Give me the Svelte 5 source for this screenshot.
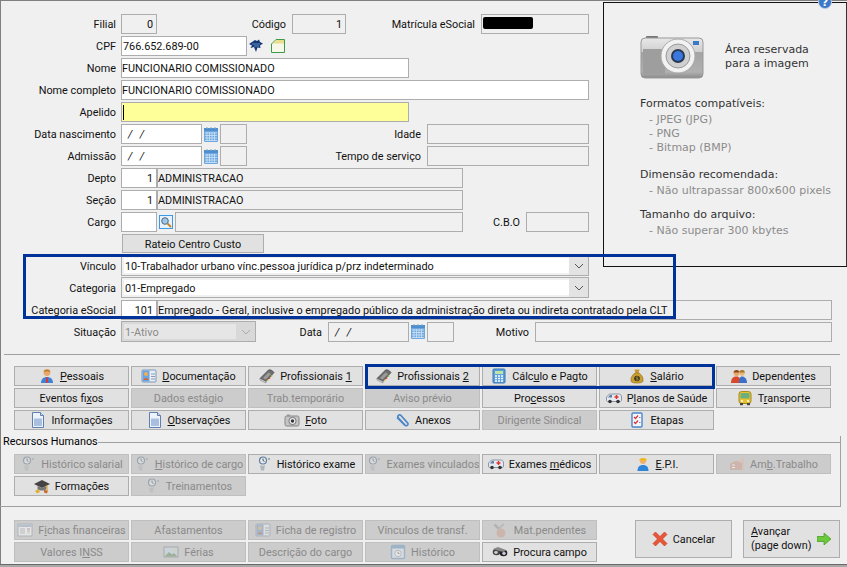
<script>
  const main = [
    [['&Pessoais','person'],['&Documentação','card'],['Profissionais &1','book'],['Profissionais &2','book'],['Cálc&ulo e Pagto','calc'],['&Salário','money'],['Dependen&tes','people']],
    [['Eventos fi&xos'],['Dados está&gio',null,1],['Trab.temporário',null,1],['Aviso prévio',null,1],['Pro&cessos'],['P&lanos de Saúde','amb'],['T&ransporte','bus']],
    [['Informações','sheet'],['&Observações','sheet'],['&Foto','cam'],['Anexos','clip'],['Dirigente Sindical',null,1],['Etapas','check']]
  ];
  const rh = [
    [['Histórico salarial','steth',1],['&Histórico de cargo','steth',1],['Histórico exame','steth'],['Exames vinculados','steth',1],['Exames &médicos','amb'],['&E.P.I.','worker'],['Am&b.Trabalho','factory',1]],
    [['Formações','grad'],['Treinamentos','steth',1]]
  ];
  const foot = [
    [['F&ichas financeiras','table',1],['Afastamentos',null,1],['Ficha de registro','card',1],['Vínculos de transf.',null,1],['Mat.pendentes','wrench',1]],
    [['Valores I&NSS',null,1],['Férias','pic',1],['Descrição do cargo',null,1],['Histórico','clock',1],['Procura campo','bino']]
  ];
  const parts = (s) => {
    const i = s.indexOf('&');
    return i < 0 ? [s, '', ''] : [s.slice(0, i), s[i + 1], s.slice(i + 2)];
  };
</script>

{#snippet ic(n)}
  <svg class="ic" viewBox="0 0 16 16" width="16" height="16">
    {#if n === 'person'}
      <circle cx="8" cy="4.500" r="3.400" fill="#e9a868"/><path d="M4.600 4c.4-3 6.400-3 6.800 0-2-1-4.800-1-6.800 0z" fill="#b8782c"/><path d="M2 15c0-4 2.500-6 6-6s6 2 6 6z" fill="#3f83d6"/><path d="M7.400 9h1.200l.6 5-1.200 1-1.200-1z" fill="#d33"/>
    {:else if n === 'card'}
      <rect x="1" y="2" width="14" height="12" rx="1" fill="#e8eef6" stroke="#7f98b8"/><rect x="1.500" y="2.500" width="7" height="11" fill="#6aa2e2"/><circle cx="5" cy="6" r="2" fill="#f0b050"/><path d="M2.500 12c0-2.500 5-2.500 5 0z" fill="#d9622a"/><path d="M10 6h4M10 8.500h4M10 11h4" stroke="#8a9bb0"/>
    {:else if n === 'book'}
      <path d="M1 10.500 9.500 2c1.500-.8 4 .5 5.500 2.500L7 13.500z" fill="#6e6e6e" stroke="#3f3f3f" stroke-width=".7"/><path d="m1 10.500 6 3V15l-6-3z" fill="#e0e0e0" stroke="#666" stroke-width=".5"/><path d="M4 10 9.500 4.500l2.500 1.500-5.500 5.500z" fill="#9c9c9c"/><path d="m12.500 7 1.200.7-1 1.200-1.200-.7z" fill="#8c3"/><path d="m10.500 9.200 1.200.7-1 1.200-1.200-.7z" fill="#e33"/><path d="m8.500 11.400 1.200.7-1 1.200-1.200-.7z" fill="#eb3"/>
    {:else if n === 'calc'}
      <rect x="2" y="1" width="12" height="14" rx="1" fill="#5aa0de" stroke="#3b79b5"/><rect x="4" y="3" width="8" height="3" fill="#bfe3a0"/><path d="M4 8h2M7 8h2M10 8h2M4 10.500h2M7 10.500h2M10 10.500h2M4 13h2M7 13h2M10 13h2" stroke="#fff" stroke-width="1.400"/>
    {:else if n === 'money'}
      <path d="M5.500 1.500h5L9.500 5h-3z" fill="#c89a34"/><path d="M6 5C3 7 1.500 10 2 13c.3 1.500 2 2 6 2s5.700-.5 6-2c.5-3-1-6-4-8z" fill="#c9a02e" stroke="#8b6a18" stroke-width=".6"/><circle cx="8" cy="10.500" r="2.800" fill="#3a3018"/><path d="M9.200 9.300c-1-.6-2.400-.3-2.200.5s2.200.5 2.200 1.400-1.400 1-2.400.5" stroke="#e0c060" stroke-width=".7" fill="none"/>
    {:else if n === 'people'}
      <circle cx="5.500" cy="5" r="3" fill="#e9a868"/><path d="M2.500 4.500c.3-3.500 6-3.500 6 0z" fill="#8a4a1c"/><path d="M0 15c0-5 2.500-6.500 5.500-6.500s4 2 4 6.500z" fill="#d8492a"/><circle cx="11" cy="5" r="2.800" fill="#e9b878"/><path d="M8.300 4.500c.3-3.200 5.400-3.200 5.400 0z" fill="#a8742c"/><path d="M8 15c0-4 1-6.500 3-6.500s5 1.500 5 6.500z" fill="#3c70c8"/>
    {:else if n === 'amb'}
      <path d="M.5 10V7l3-3h9c2 0 3 1 3 3v3c0 1-.5 1.500-1 1.500H1.500C1 11.500.5 11 .5 10z" fill="#e6e9ee" stroke="#8896a8"/><path d="M2 7.500l2-2.500h2v2.500z" fill="#5d7fa6"/><path d="M10.500 5v4M8.500 7h4" stroke="#e03030" stroke-width="1.400"/><circle cx="4" cy="11.500" r="1.800" fill="#333"/><circle cx="12" cy="11.500" r="1.800" fill="#333"/>
    {:else if n === 'bus'}
      <rect x="2" y="1.500" width="12" height="12" rx="2.500" fill="#e8c030" stroke="#a88a18"/><rect x="3.500" y="3" width="9" height="5.500" rx="1" fill="#6ab07c"/><rect x="3" y="13" width="3" height="2.200" fill="#444"/><rect x="10" y="13" width="3" height="2.200" fill="#444"/><circle cx="5" cy="11" r="1" fill="#fff"/><circle cx="11" cy="11" r="1" fill="#fff"/>
    {:else if n === 'sheet'}
      <path d="M2.500.5h8l3 3v12h-11z" fill="#eef2fa" stroke="#5f7fb0"/><path d="M10.500.5v3h3" fill="#cfdcef" stroke="#5f7fb0"/><rect x="4" y="6.500" width="8" height="7.500" fill="#a9bfe0"/>
    {:else if n === 'cam'}
      <rect x="1" y="4" width="14" height="10" rx="1.500" fill="#c4c4c4" stroke="#888"/><rect x="3" y="2.500" width="3" height="2" fill="#999"/><circle cx="8.500" cy="9" r="3.600" fill="#eee" stroke="#777"/><circle cx="8.500" cy="9" r="1.700" fill="#334"/>
    {:else if n === 'clip'}
      <path d="M3 5.500 10.500 13c1.500 1.500 4 .5 3.500-1.500L7 3.500C5.500 2 3 3.500 4 5.500l7 7.500" fill="none" stroke="#4a86c8" stroke-width="1.700"/>
    {:else if n === 'check'}
      <rect x="3" y="1" width="10" height="14" rx="1" fill="#f3f6fb" stroke="#4a86c8" stroke-width="1.400"/><path d="m5 5 1.500 1.500L9 3.500M5 10l1.500 1.500L9 8.500" stroke="#d33" stroke-width="1.200" fill="none"/><path d="M10 5.500h1.500M10 10.500h1.500" stroke="#88a"/>
    {:else if n === 'steth'}
      <circle cx="7" cy="4.500" r="3.500" fill="#e4e8ec" stroke="#5f7f9f" stroke-width="1.200"/><path d="M7 2.500v2l1.500 1" stroke="#456" fill="none"/><path d="M4 9c1 1 4 1 5 0l-1 5.500H5z" fill="#aeb6be"/><circle cx="13" cy="3" r="1" fill="#8a9aaa"/>
    {:else if n === 'worker'}
      <circle cx="8" cy="5" r="3" fill="#eeb070"/><path d="M4 4.500C4 1 12 1 12 4.500z" fill="#f0b818"/><path d="M2.500 15c0-4 2-6 5.500-6s5.500 2 5.500 6z" fill="#2f86d8"/>
    {:else if n === 'factory'}
      <path d="M1 14V7l4-2 8-1V1h2v13z" fill="#f0b8a0"/><path d="M1 14V8l6-3 6 2v7z" fill="#e89a82"/><path d="M3 9h3M3 11.500h3" stroke="#fff"/>
    {:else if n === 'grad'}
      <path d="M0 6 8 2l8 4-8 4z" fill="#444"/><path d="M3.500 8v3c2 2 7 2 9 0V8L8 10z" fill="#777"/><path d="M13 7v5" stroke="#e0a020"/><path d="M1 13l3-2 2 3-3 1.500z" fill="#e0b030"/><path d="M10 12l4 .5-1 3-3-1z" fill="#c96a28"/>
    {:else if n === 'table'}
      <rect x="1" y="2" width="14" height="12" fill="#fff" stroke="#8a9ab0"/><rect x="1.500" y="2.500" width="13" height="2.500" fill="#9ab8d8"/><path d="M3 7h5M3 9h5M3 11h5" stroke="#9ab"/><path d="M10 7h3" stroke="#d66"/><path d="M10 9h3" stroke="#7b7"/><path d="M10 11h3" stroke="#dc7"/>
    {:else if n === 'pic'}
      <rect x="1" y="3" width="14" height="10" fill="#bcdcf0" stroke="#888"/><path d="M1.500 12.500 6 8l3 2.500 2-1.500 3.500 3.500z" fill="#5ca050"/><circle cx="11" cy="6" r="1.300" fill="#f0d060"/>
    {:else if n === 'clock'}
      <rect x="1.500" y="1.500" width="13" height="13" rx="1" fill="#dcecfa" stroke="#5aa0de" stroke-width="1.500"/><rect x="2" y="2" width="12" height="2.500" fill="#5aa0de"/><circle cx="8" cy="9.500" r="3.200" fill="#fff" stroke="#9ab"/><path d="M8 7.800v1.700h1.500" stroke="#678" fill="none"/>
    {:else if n === 'wrench'}
      <path d="M1.500 2.500 6 7" stroke="#999" stroke-width="2.500"/><path d="M11 2 8 4.500 6 7" stroke="#aaa" stroke-width="2"/><circle cx="8" cy="11" r="4.500" fill="#e59a80"/>
    {:else if n === 'bino'}
      <ellipse cx="4.500" cy="8" rx="3.800" ry="3.200" fill="#444"/><ellipse cx="11.500" cy="9" rx="3.800" ry="3.200" fill="#222"/><path d="M1 5 6 3l8 3-2 2-5-1z" fill="#888"/><ellipse cx="4" cy="8.500" rx="1.800" ry="1.400" fill="#ccd"/><ellipse cx="12" cy="9.500" rx="1.800" ry="1.400" fill="#ccd"/>
    {/if}
  </svg>
{/snippet}

{#snippet cal()}
  <svg class="cal" viewBox="0 0 14 15" width="14" height="15">
    <rect x="0" y="1" width="14" height="14" rx="1" fill="#6fa8de"/><rect x="0" y="1" width="14" height="3" fill="#4f8fd0"/>
    <path d="M1 6h12M1 8.500h12M1 11h12M1 13.500h12M3 5v9M5.500 5v9M8 5v9M10.500 5v9" stroke="#cfe3f7" stroke-width=".8"/>
    <path d="M3 0v2M7 0v2M11 0v2" stroke="#8ab"/>
  </svg>
{/snippet}

{#snippet btn(b)}
  {@const p = parts(b[0])}
  <div class="b" class:off={b[2]}>
    {#if b[1]}<span class="iw" class:dim={b[2]}>{@render ic(b[1])}</span>{/if}
    <span class="t">{p[0]}{#if p[1]}<u>{p[1]}</u>{/if}{p[2]}</span>
  </div>
{/snippet}

<div class="win">
  <div class="top">
    <div class="form">
      <div class="row">
        <span class="lbl">Filial</span><div class="f num w36 off">0</div>
        <span class="lbl2 c1">Código</span><div class="f num w54 off">1</div>
        <span class="lbl2 c1">Matrícula eSocial</span>
        <div class="f w108 off blk"><i></i></div>
      </div>
      <div class="row">
        <span class="lbl">CPF</span><div class="f w126 wh pad">766.652.689-00</div>
        <svg class="eagle" viewBox="0 0 14 14" width="14" height="14"><path d="M0 5 6 1l2 1 2-1.500 1 2.500 3 1.500-3 2 .5 2.500-3-.5-1.500 4.500L5 8 1.500 9 3 6.500z" fill="#123a78"/><path d="M3 5h8M5 7h5" stroke="#8fb0d8" stroke-width=".7"/></svg>
        <svg class="gdoc" viewBox="0 0 14 14" width="14" height="14"><path d="M.5 5 5 .5h8.500v13H.5z" fill="#f6f8e8" stroke="#3d9a4a"/><path d="M5.500 1h7.500v3.500H1.500z" fill="#eadf8c"/></svg>
      </div>
      <div class="row"><span class="lbl">Nome</span><div class="f w288 wh">FUNCIONARIO COMISSIONADO</div></div>
      <div class="row"><span class="lbl">Nome completo</span><div class="f w468 wh">FUNCIONARIO COMISSIONADO</div></div>
      <div class="row"><span class="lbl">Apelido</span><div class="f w288 yl"><b class="caret"></b></div></div>
      <div class="row">
        <span class="lbl">Data nascimento</span><div class="f w81 wh date">/  /</div>{@render cal()}<div class="f w27 off"></div>
        <div class="tail"><span class="lbl3">Idade</span><div class="f w162 off"></div></div>
      </div>
      <div class="row">
        <span class="lbl">Admissão</span><div class="f w81 wh date">/  /</div>{@render cal()}<div class="f w27 off"></div>
        <div class="tail"><span class="lbl3">Tempo de serviço</span><div class="f w162 off"></div></div>
      </div>
      <div class="row"><span class="lbl">Depto</span><div class="f num w36 wh">1</div><div class="f w306 off">ADMINISTRACAO</div></div>
      <div class="row"><span class="lbl">Seção</span><div class="f num w36 wh">1</div><div class="f w306 off">ADMINISTRACAO</div></div>
      <div class="row">
        <span class="lbl">Cargo</span><div class="f w36 wh"></div>
        <svg class="srch" viewBox="0 0 14 14" width="14" height="14"><rect x=".5" y=".5" width="13" height="13" fill="#e8f2fc" stroke="#3a9ae8"/><circle cx="6" cy="6" r="3.300" fill="#9cc8ee" stroke="#567"/><path d="m8.500 8.500 3.500 3.500" stroke="#c8862a" stroke-width="2"/></svg>
        <div class="f w288 off"></div>
        <div class="tail"><span class="lbl3">C.B.O</span><div class="f w63 off"></div></div>
      </div>
      <div class="rateio">Rateio Centro Custo</div>
      <div class="row r22"><span class="lbl">Vínculo</span>
        <div class="sel"><span>10-Trabalhador urbano vínc.pessoa jurídica p/prz indeterminado</span><em><svg viewBox="0 0 10 6" width="10" height="6"><path d="m1 1 4 4 4-4" fill="none" stroke="#555"/></svg></em></div>
      </div>
      <div class="row r22"><span class="lbl">Categoria</span>
        <div class="sel"><span>01-Empregado</span><em><svg viewBox="0 0 10 6" width="10" height="6"><path d="m1 1 4 4 4-4" fill="none" stroke="#555"/></svg></em></div>
      </div>
    </div>
    <aside class="panel">
      <svg class="help" viewBox="0 0 14 14" width="14" height="14"><circle cx="7" cy="7" r="6.500" fill="#3a78c8" stroke="#bcd"/><text x="7" y="10.500" text-anchor="middle" class="q">?</text></svg>
      <div class="hero">
        <svg viewBox="0 0 64 44" width="64" height="44">
          <defs><linearGradient id="cb" x1="0" y1="0" x2="0" y2="1"><stop offset="0" stop-color="#e8e8e8"/><stop offset=".35" stop-color="#cfcfcf"/><stop offset=".36" stop-color="#a4a4a4"/><stop offset=".85" stop-color="#b0b0b0"/><stop offset="1" stop-color="#8a8a8a"/></linearGradient></defs>
          <rect x="6" y="1" width="12" height="4" rx="1" fill="#777"/>
          <rect x="1" y="3" width="62" height="40" rx="4" fill="url(#cb)" stroke="#999"/>
          <rect x="3" y="14" width="22" height="25" fill="#9e9e9e"/>
          <circle cx="38" cy="21" r="17" fill="#f2f2f2" stroke="#aaa"/>
          <circle cx="38" cy="21" r="12" fill="#d0d0d0" stroke="#999"/>
          <circle cx="38" cy="21" r="7" fill="#2a3a50"/>
          <circle cx="38" cy="21" r="5" fill="#3a78e0"/>
          <rect x="53" y="6" width="6" height="4" fill="#3a78c8"/>
        </svg>
        <p>Área reservada<br/>para a imagem</p>
      </div>
      <h4 class="h1">Formatos compatíveis:</h4>
      <p class="it">- JPEG (JPG)</p><p class="it">- PNG</p><p class="it">- Bitmap (BMP)</p>
      <h4 class="h2">Dimensão recomendada:</h4>
      <p class="it">- Não ultrapassar 800x600 pixels</p>
      <h4 class="h3">Tamanho do arquivo:</h4>
      <p class="it">- Não superar 300 kbytes</p>
    </aside>
  </div>

  <div class="row r22"><span class="lbl">Categoria eSocial</span><div class="f num w36 wh">101</div><div class="f w675 off">Empregado - Geral, inclusive o empregado público da administração direta ou indireta contratado pela CLT</div></div>
  <div class="row r22 last">
    <span class="lbl">Situação</span>
    <div class="sel dis"><span>1-Ativo</span><em><svg viewBox="0 0 10 6" width="10" height="6"><path d="m1 1 4 4 4-4" fill="none" stroke="#aaa"/></svg></em></div>
    <span class="lbl2 c3">Data</span><div class="f w81 off date">/  /</div>{@render cal()}<div class="f w27 off"></div>
    <span class="lbl2 c4">Motivo</span><div class="f w297 off"></div>
  </div>

  <hr class="sep"/>

  <div class="grid">
    {#each main as r}{#each r as b}{@render btn(b)}{/each}{#if r.length < 7}<div></div>{/if}{/each}
  </div>

  <section class="group">
    <div class="gt"><span>Recursos Humanos</span><i></i></div>
    <div class="grid">
      {#each rh as r}{#each r as b}{@render btn(b)}{/each}{/each}
    </div>
  </section>

  <div class="foot">
    <div class="grid g5">
      {#each foot as r}{#each r as b}{@render btn(b)}{/each}{/each}
    </div>
    <div class="b big cancel">
      <svg viewBox="0 0 16 16" width="16" height="16"><path d="M1 3.500 3.500 1 8 5.500 12.500 1 15 3.500 10.500 8l4.500 4.500-2.500 2.500L8 10.500 3.500 15 1 12.500 5.500 8z" fill="#e8563a" stroke="#c23a20" stroke-width=".6"/></svg>
      <span class="t">Cancelar</span>
    </div>
    <div class="b big next">
      <span class="tl"><u>A</u>vançar<br/>(page down)</span>
      <svg viewBox="0 0 14 12" width="14" height="12"><path d="M0 3.500h7V0l7 6-7 6V8.500H0z" fill="#6cc93c" stroke="#3c9a1e" stroke-width=".7"/></svg>
    </div>
  </div>

  <div class="ov o1"></div>
  <div class="ov o2"></div>
</div>

<style>
  :global(body) { margin: 0; background: #a9a9a9; }
  .win {
    position: relative;
    width: 847px;
    height: 565px;
    overflow: hidden;
    box-sizing: border-box;
    background: #f0f0f0;
    box-shadow: inset 1px 1px 0 #808080;
    border-bottom: 1px solid #6a6a6a;
    font: 10.850px/14px Roboto, "Noto Sans", sans-serif;
    color: #111;
  }
  .top { display: grid; grid-template-columns: 603px 244px; }
  .form { padding-top: 14px; }
  .row { display: flex; align-items: center; height: 20px; margin-bottom: 2px; }
  .r22 { height: 21px; margin-bottom: 1px; }
  .lbl { width: 116px; margin-right: 5px; text-align: right; white-space: nowrap; flex: none; padding-top: 2px; }
  .lbl2 { flex: none; white-space: nowrap; text-align: right; padding-top: 2px; }
  .c1 { width: 129px; margin-right: 6px; }
  .c3 { width: 66px; margin-right: 6px; }
  .c4 { width: 75px; margin-right: 6px; }
  .lbl3 { margin-right: 6px; white-space: nowrap; padding-top: 2px; }
  .tail { display: flex; align-items: center; margin-left: auto; margin-right: 14px; }
  .f {
    box-sizing: border-box;
    height: 20px;
    border: 1px solid #adadad;
    line-height: 19px;
    white-space: nowrap;
    overflow: hidden;
    flex: none;
  }
  .wh { background: #fff; }
  .off { background: #f0f0f0; }
  .yl { background: #ffff99; position: relative; }
  .num { text-align: right; padding-right: 3px; }
  .pad { padding-left: 1px; }
  .date { padding-left: 6px; white-space: pre; font-style: italic; word-spacing: 1px; }
  .w27 { width: 27px; } .w36 { width: 36px; } .w54 { width: 54px; } .w63 { width: 63px; }
  .w81 { width: 81px; } .w108 { width: 108px; } .w126 { width: 126px; } .w162 { width: 162px; }
  .w288 { width: 288px; } .w297 { width: 297px; } .w306 { width: 306px; } .w468 { width: 468px; } .w675 { width: 675px; }
  .blk { display: flex; align-items: center; padding: 0 0 2px 1px; }
  .blk i { display: block; width: 50px; height: 12px; background: #000; border-radius: 2px; }
  .caret { position: absolute; left: 1px; top: 2px; width: 1px; height: 15px; background: #000; }
  .eagle { margin-left: 2px; }
  .gdoc { margin-left: 8px; }
  .cal { margin: 0 2px; flex: none; }
  .srch { margin: 0 2px; flex: none; }
  .rateio {
    box-sizing: border-box;
    width: 142px;
    height: 19px;
    margin: 1px 0 2px 122px;
    background: #e1e1e1;
    border: 1px solid #adadad;
    text-align: center;
    line-height: 20px;
  }
  .sel {
    box-sizing: border-box;
    display: flex;
    width: 468px;
    height: 21px;
    border: 1px solid #adadad;
    padding: 2px 0 2px 2px;
    background: #f0f0f0;
  }
  .sel span { flex: 1; background: #fff; padding-left: 1px; line-height: 18px; white-space: nowrap; overflow: hidden; }
  .sel em { width: 19px; margin: -2px 0; display: flex; align-items: center; justify-content: center; background: #e3e3e3; }
  .sel.dis { width: 135px; background: #d8d8d8; color: #8a8a8a; }
  .sel.dis span { background: #e6e6e6; }
  .sel.dis em { background: #d8d8d8; }

  .panel {
    position: relative;
    box-sizing: border-box;
    height: 265px;
    margin-top: 2px;
    padding: 32px 0 0 36px;
    border: 1px solid #111;
    border-right-color: #333;
    font: 11px/14px "DejaVu Sans", sans-serif;
    color: #333;
  }
  .panel p, .panel h4 { margin: 0; font-weight: 400; white-space: nowrap; }
  .help { position: absolute; top: -8px; right: 14px; }
  .q { font: 700 11px "DejaVu Sans", sans-serif; fill: #fff; }
  .hero { display: flex; align-items: center; gap: 21px; }
  .panel .h1 { margin-top: 18px; }
  .panel .h2 { margin-top: 15px; }
  .panel .h3 { margin-top: 12px; }
  .it { padding: 2px 0 0 9px; height: 12px; color: #8c8c8c; }

  .last { margin-bottom: 0; }
  .sep { margin: 12px 7px 0 4px; border: 0; border-top: 1px solid #a0a0a0; height: 0; }

  .grid {
    display: grid;
    grid-template-columns: repeat(7, 115px);
    grid-auto-rows: 20px;
    gap: 2px;
    margin: 11px 0 0 14px;
  }
  .g5 { grid-template-columns: repeat(5, 115px); margin: 0 0 0 14px; }
  .b {
    box-sizing: border-box;
    display: flex;
    align-items: center;
    justify-content: center;
    gap: 5px;
    background: #e1e1e1;
    border: 1px solid #adadad;
    white-space: nowrap;
    overflow: hidden;
  }
  .t { padding-top: 2px; }
  .b.off { background: #cccccc; border-color: #bfbfbf; color: #8a8a8a; }
  .iw { display: flex; flex: none; }
  .iw.dim { opacity: .5; filter: saturate(.6); }
  .ic { display: block; }
  u { text-underline-offset: 1px; }

  .group {
    box-sizing: border-box;
    height: 71px;
    margin: 6px 6px 0 0;
    border-right: 1px solid #a0a0a0;
    border-bottom: 1px solid #a0a0a0;
  }
  .gt { display: flex; align-items: center; height: 12px; padding-left: 3px; color: #000; }
  .gt span { white-space: nowrap; }
  .gt i { flex: 1; border-top: 1px solid #a0a0a0; }
  .group .grid { margin-top: 6px; }

  .foot { display: flex; align-items: flex-start; margin-top: 13px; }
  .big { height: 38px; flex: none; }
  .cancel { width: 97px; margin-left: 38px; }
  .next { width: 97px; margin-left: 11px; justify-content: flex-start; padding-left: 7px; gap: 6px; }
  .tl { line-height: 14px; }

  .ov { position: absolute; box-sizing: border-box; border: 3px solid #003399; pointer-events: none; }
  .o1 { left: 23px; top: 254px; width: 653px; height: 65px; }
  .o2 { left: 365px; top: 364px; width: 350px; height: 25px; }
</style>
